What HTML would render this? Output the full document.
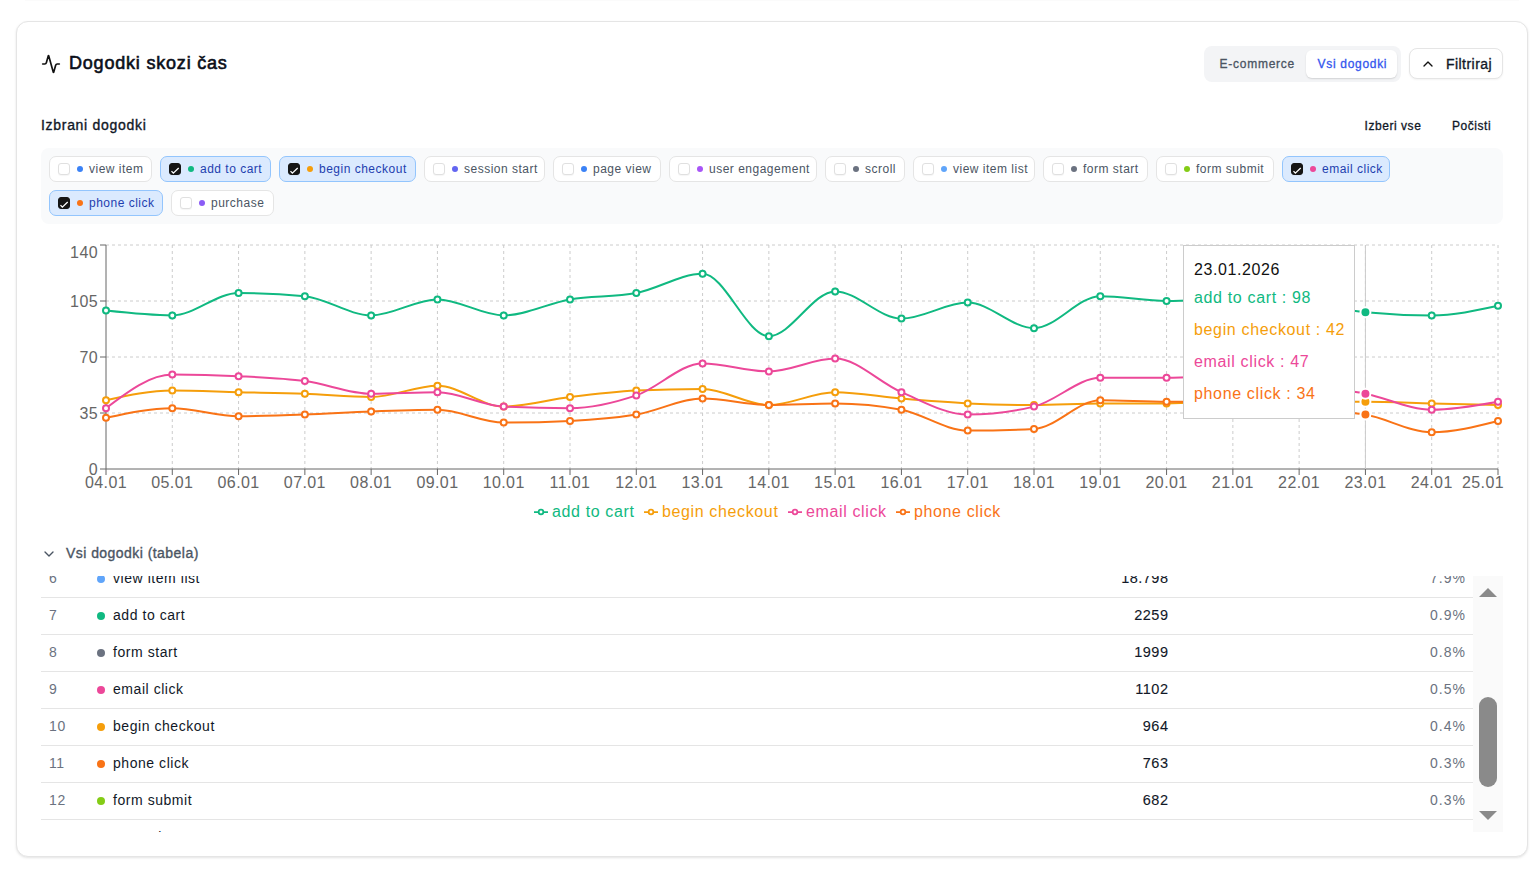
<!DOCTYPE html>
<html><head><meta charset="utf-8">
<style>
*{box-sizing:border-box;margin:0;padding:0}
html,body{width:1539px;height:869px;overflow:hidden;background:#fff;font-family:"Liberation Sans",sans-serif;color:#111827}
.abs{position:absolute}
.topline{position:absolute;left:25px;top:0;width:1494px;height:1px;background:#fbfbfb}
.card{position:absolute;left:16px;top:21px;width:1512px;height:836px;border:1px solid #e5e5e5;border-radius:12px;background:#fff;box-shadow:0 1px 3px rgba(0,0,0,.08),0 1px 2px rgba(0,0,0,.04)}
.title{position:absolute;left:69px;top:51px;font-size:18px;line-height:24px;font-weight:400;-webkit-text-stroke:.6px currentColor;white-space:nowrap;letter-spacing:.8px;color:#0b0f19}
.tgl{position:absolute;left:1204px;top:46px;width:197px;height:36px;background:#f3f4f6;border-radius:8px}
.tg1{position:absolute;left:1219.5px;top:56px;font-size:12px;line-height:16px;color:#4b5563;-webkit-text-stroke:.3px currentColor;white-space:nowrap;letter-spacing:.75px}
.pill{position:absolute;left:1306px;top:50px;width:91px;height:28px;background:#fff;border-radius:6px;box-shadow:0 1px 2px rgba(0,0,0,.1),0 1px 1px rgba(0,0,0,.04)}
.tg2{position:absolute;left:1317.5px;top:56px;font-size:12px;line-height:16px;color:#3355ee;-webkit-text-stroke:.3px currentColor;white-space:nowrap;letter-spacing:.7px}
.fbtn{position:absolute;left:1409px;top:48px;width:94px;height:31px;border:1px solid #e5e5e5;border-radius:8px;background:#fff;box-shadow:0 1px 2px rgba(0,0,0,.05)}
.ftxt{position:absolute;left:1446px;top:55px;font-size:14px;line-height:18px;font-weight:400;-webkit-text-stroke:.35px currentColor;white-space:nowrap;letter-spacing:.45px;color:#111827}
.h2{position:absolute;left:41px;top:116px;font-size:14px;line-height:18px;font-weight:400;-webkit-text-stroke:.35px currentColor;white-space:nowrap;letter-spacing:.7px;color:#111827}
.lnk{position:absolute;top:118px;font-size:12px;line-height:16px;font-weight:400;-webkit-text-stroke:.3px currentColor;white-space:nowrap;letter-spacing:.55px;color:#111827}
.panel{position:absolute;left:41px;top:148px;width:1462px;height:76px;background:#f9fafb;border-radius:8px;padding:8px;display:flex;flex-wrap:wrap;gap:8px;align-content:flex-start}
.chip{height:26px;border:1px solid #e5e5e5;border-radius:7px;background:#fff;display:flex;align-items:center;padding-left:8px;position:relative}
.chip.sel{background:#dbeafe;border-color:#93c5fd}
.cb{width:12px;height:12px;border:1px solid #e0e0e0;border-radius:3px;background:#fff;display:block;position:relative;box-shadow:0 1px 1px rgba(0,0,0,.04)}
.cb.on{background:#151515;border-color:#151515}
.cb svg{position:absolute;left:-1px;top:-1px}
.dot{width:6px;height:6px;border-radius:50%;margin-left:7px;display:block}
.ct{margin-left:6px;font-size:12px;line-height:16px;color:#4b5563;white-space:nowrap;letter-spacing:.5px}
.chip.sel .ct{color:#1e40af}
.leg{position:absolute;top:502px;height:20px;display:flex;align-items:center;font-size:16px;line-height:20px;white-space:nowrap;letter-spacing:.63px}
.leg svg{margin-right:4px}
.tip{position:absolute;left:1183px;top:245px;width:172px;height:174px;background:#fff;border:1px solid #ccc;padding:11.5px 10px 10px;font-size:16px;white-space:nowrap}
.tip .lbl{line-height:24px;color:#111;letter-spacing:.59px}
.tip .it{line-height:24px;padding:4px 0;letter-spacing:.65px}
.sec{position:absolute;left:66px;top:544px;font-size:14px;line-height:18px;font-weight:400;-webkit-text-stroke:.35px currentColor;color:#4b5563;white-space:nowrap;letter-spacing:.45px}
.scroller{position:absolute;left:41px;top:576px;width:1462px;height:256px;overflow:hidden}
.row{position:absolute;left:0;width:1432px;height:37px;border-bottom:1px solid #e5e5e5}
.row span{position:absolute;top:0;line-height:35px;font-size:14px;white-space:nowrap}
.rk{left:8px;color:#6b7280;letter-spacing:.6px}
.rdot{left:56px;top:14px!important;width:8px;height:8px;border-radius:50%}
.rn{left:72px;color:#111827;letter-spacing:.55px}
.rc{right:304.5px;color:#111827;letter-spacing:.5px;font-size:14.5px!important;-webkit-text-stroke:.1px currentColor}
.rp{right:7px;color:#6b7280;letter-spacing:1px}
.sb{position:absolute;left:1432px;top:0;width:30px;height:256px;background:#fafafa}
.sbt{position:absolute;left:6px;top:121px;width:18px;height:90px;border-radius:9px;background:#8a8a8a}
</style></head><body>
<div class="topline"></div>
<div class="card"></div>
<svg class="abs" style="left:41px;top:54px" width="20" height="20" viewBox="0 0 24 24" fill="none" stroke="#111" stroke-width="2" stroke-linecap="round" stroke-linejoin="round"><path d="M22 12h-2.48a2 2 0 0 0-1.93 1.46l-2.35 8.36a.25.25 0 0 1-.48 0L9.24 2.18a.25.25 0 0 0-.48 0l-2.35 8.36A2 2 0 0 1 4.49 12H2"/></svg>
<div class="title">Dogodki skozi čas</div>
<div class="tgl"></div>
<div class="tg1">E-commerce</div>
<div class="pill"></div>
<div class="tg2">Vsi dogodki</div>
<div class="fbtn"></div>
<svg class="abs" style="left:1420px;top:56px" width="16" height="16" viewBox="0 0 24 24" fill="none" stroke="#111" stroke-width="2" stroke-linecap="round" stroke-linejoin="round"><path d="m18 15-6-6-6 6"/></svg>
<div class="ftxt">Filtriraj</div>
<div class="h2">Izbrani dogodki</div>
<div class="lnk" style="left:1364.5px">Izberi vse</div>
<div class="lnk" style="left:1452px">Počisti</div>
<div class="panel"><div class="chip" style="width:103px"><span class="cb"></span><span class="dot" style="background:#3b82f6"></span><span class="ct">view item</span></div><div class="chip sel" style="width:111px"><span class="cb on"><svg width="12" height="12" viewBox="0 0 12 12"><path d="M2.5 8.1L4.35 10.1L9.7 5" stroke="#fff" stroke-width="1.3" fill="none"/></svg></span><span class="dot" style="background:#10b981"></span><span class="ct">add to cart</span></div><div class="chip sel" style="width:137px"><span class="cb on"><svg width="12" height="12" viewBox="0 0 12 12"><path d="M2.5 8.1L4.35 10.1L9.7 5" stroke="#fff" stroke-width="1.3" fill="none"/></svg></span><span class="dot" style="background:#f59e0b"></span><span class="ct">begin checkout</span></div><div class="chip" style="width:121px"><span class="cb"></span><span class="dot" style="background:#6366f1"></span><span class="ct">session start</span></div><div class="chip" style="width:108px"><span class="cb"></span><span class="dot" style="background:#3b82f6"></span><span class="ct">page view</span></div><div class="chip" style="width:148px"><span class="cb"></span><span class="dot" style="background:#a855f7"></span><span class="ct">user engagement</span></div><div class="chip" style="width:80px"><span class="cb"></span><span class="dot" style="background:#6b7280"></span><span class="ct">scroll</span></div><div class="chip" style="width:122px"><span class="cb"></span><span class="dot" style="background:#60a5fa"></span><span class="ct">view item list</span></div><div class="chip" style="width:105px"><span class="cb"></span><span class="dot" style="background:#6b7280"></span><span class="ct">form start</span></div><div class="chip" style="width:118px"><span class="cb"></span><span class="dot" style="background:#84cc16"></span><span class="ct">form submit</span></div><div class="chip sel" style="width:108px"><span class="cb on"><svg width="12" height="12" viewBox="0 0 12 12"><path d="M2.5 8.1L4.35 10.1L9.7 5" stroke="#fff" stroke-width="1.3" fill="none"/></svg></span><span class="dot" style="background:#ec4899"></span><span class="ct">email click</span></div><div class="chip sel" style="width:114px"><span class="cb on"><svg width="12" height="12" viewBox="0 0 12 12"><path d="M2.5 8.1L4.35 10.1L9.7 5" stroke="#fff" stroke-width="1.3" fill="none"/></svg></span><span class="dot" style="background:#f97316"></span><span class="ct">phone click</span></div><div class="chip" style="width:103px"><span class="cb"></span><span class="dot" style="background:#8b5cf6"></span><span class="ct">purchase</span></div></div>
<svg class="chart" width="1539" height="540" viewBox="0 0 1539 540" style="position:absolute;left:0;top:0">
<g stroke="#ccc" stroke-dasharray="3 3" fill="none"><line x1="106.0" y1="413.0" x2="1498.0" y2="413.0"/><line x1="106.0" y1="357.0" x2="1498.0" y2="357.0"/><line x1="106.0" y1="301.0" x2="1498.0" y2="301.0"/><line x1="106.0" y1="245.0" x2="1498.0" y2="245.0"/><line x1="172.29" y1="245.0" x2="172.29" y2="469.0"/><line x1="238.57" y1="245.0" x2="238.57" y2="469.0"/><line x1="304.86" y1="245.0" x2="304.86" y2="469.0"/><line x1="371.14" y1="245.0" x2="371.14" y2="469.0"/><line x1="437.43" y1="245.0" x2="437.43" y2="469.0"/><line x1="503.71" y1="245.0" x2="503.71" y2="469.0"/><line x1="570.00" y1="245.0" x2="570.00" y2="469.0"/><line x1="636.29" y1="245.0" x2="636.29" y2="469.0"/><line x1="702.57" y1="245.0" x2="702.57" y2="469.0"/><line x1="768.86" y1="245.0" x2="768.86" y2="469.0"/><line x1="835.14" y1="245.0" x2="835.14" y2="469.0"/><line x1="901.43" y1="245.0" x2="901.43" y2="469.0"/><line x1="967.71" y1="245.0" x2="967.71" y2="469.0"/><line x1="1034.00" y1="245.0" x2="1034.00" y2="469.0"/><line x1="1100.29" y1="245.0" x2="1100.29" y2="469.0"/><line x1="1166.57" y1="245.0" x2="1166.57" y2="469.0"/><line x1="1232.86" y1="245.0" x2="1232.86" y2="469.0"/><line x1="1299.14" y1="245.0" x2="1299.14" y2="469.0"/><line x1="1365.43" y1="245.0" x2="1365.43" y2="469.0"/><line x1="1431.71" y1="245.0" x2="1431.71" y2="469.0"/><line x1="1498.00" y1="245.0" x2="1498.00" y2="469.0"/></g>
<g stroke="#666" fill="none"><line x1="106.0" y1="245.0" x2="106.0" y2="469.0"/><line x1="106.0" y1="469.0" x2="1498.0" y2="469.0"/><line x1="100.0" y1="469.0" x2="106.0" y2="469.0"/><line x1="100.0" y1="413.0" x2="106.0" y2="413.0"/><line x1="100.0" y1="357.0" x2="106.0" y2="357.0"/><line x1="100.0" y1="301.0" x2="106.0" y2="301.0"/><line x1="100.0" y1="245.0" x2="106.0" y2="245.0"/><line x1="106.00" y1="469.0" x2="106.00" y2="475.0"/><line x1="172.29" y1="469.0" x2="172.29" y2="475.0"/><line x1="238.57" y1="469.0" x2="238.57" y2="475.0"/><line x1="304.86" y1="469.0" x2="304.86" y2="475.0"/><line x1="371.14" y1="469.0" x2="371.14" y2="475.0"/><line x1="437.43" y1="469.0" x2="437.43" y2="475.0"/><line x1="503.71" y1="469.0" x2="503.71" y2="475.0"/><line x1="570.00" y1="469.0" x2="570.00" y2="475.0"/><line x1="636.29" y1="469.0" x2="636.29" y2="475.0"/><line x1="702.57" y1="469.0" x2="702.57" y2="475.0"/><line x1="768.86" y1="469.0" x2="768.86" y2="475.0"/><line x1="835.14" y1="469.0" x2="835.14" y2="475.0"/><line x1="901.43" y1="469.0" x2="901.43" y2="475.0"/><line x1="967.71" y1="469.0" x2="967.71" y2="475.0"/><line x1="1034.00" y1="469.0" x2="1034.00" y2="475.0"/><line x1="1100.29" y1="469.0" x2="1100.29" y2="475.0"/><line x1="1166.57" y1="469.0" x2="1166.57" y2="475.0"/><line x1="1232.86" y1="469.0" x2="1232.86" y2="475.0"/><line x1="1299.14" y1="469.0" x2="1299.14" y2="475.0"/><line x1="1365.43" y1="469.0" x2="1365.43" y2="475.0"/><line x1="1431.71" y1="469.0" x2="1431.71" y2="475.0"/><line x1="1498.00" y1="469.0" x2="1498.00" y2="475.0"/></g>
<g fill="#666" font-size="16" letter-spacing="0.4" font-family="Liberation Sans, sans-serif"><text x="98" y="474.68" text-anchor="end">0</text><text x="98" y="418.68" text-anchor="end">35</text><text x="98" y="362.68" text-anchor="end">70</text><text x="98" y="306.68" text-anchor="end">105</text><text x="98" y="257.68" text-anchor="end">140</text><text x="106.00" y="488.4" text-anchor="middle">04.01</text><text x="172.29" y="488.4" text-anchor="middle">05.01</text><text x="238.57" y="488.4" text-anchor="middle">06.01</text><text x="304.86" y="488.4" text-anchor="middle">07.01</text><text x="371.14" y="488.4" text-anchor="middle">08.01</text><text x="437.43" y="488.4" text-anchor="middle">09.01</text><text x="503.71" y="488.4" text-anchor="middle">10.01</text><text x="570.00" y="488.4" text-anchor="middle">11.01</text><text x="636.29" y="488.4" text-anchor="middle">12.01</text><text x="702.57" y="488.4" text-anchor="middle">13.01</text><text x="768.86" y="488.4" text-anchor="middle">14.01</text><text x="835.14" y="488.4" text-anchor="middle">15.01</text><text x="901.43" y="488.4" text-anchor="middle">16.01</text><text x="967.71" y="488.4" text-anchor="middle">17.01</text><text x="1034.00" y="488.4" text-anchor="middle">18.01</text><text x="1100.29" y="488.4" text-anchor="middle">19.01</text><text x="1166.57" y="488.4" text-anchor="middle">20.01</text><text x="1232.86" y="488.4" text-anchor="middle">21.01</text><text x="1299.14" y="488.4" text-anchor="middle">22.01</text><text x="1365.43" y="488.4" text-anchor="middle">23.01</text><text x="1431.71" y="488.4" text-anchor="middle">24.01</text><text x="1483.00" y="488.4" text-anchor="middle">25.01</text></g>
<line x1="1365.43" y1="245.0" x2="1365.43" y2="469.0" stroke="#ccc" stroke-width="1"/>
<path d="M106.00,310.60C128.10,313.00,150.19,315.40,172.29,315.40C194.38,315.40,216.48,293.00,238.57,293.00C260.67,293.00,282.76,294.07,304.86,296.20C326.95,298.33,349.05,315.40,371.14,315.40C393.24,315.40,415.33,299.40,437.43,299.40C459.52,299.40,481.62,315.40,503.71,315.40C525.81,315.40,547.90,303.13,570.00,299.40C592.10,295.67,614.19,297.27,636.29,293.00C658.38,288.73,680.48,273.80,702.57,273.80C724.67,273.80,746.76,336.20,768.86,336.20C790.95,336.20,813.05,291.40,835.14,291.40C857.24,291.40,879.33,318.60,901.43,318.60C923.52,318.60,945.62,302.60,967.71,302.60C989.81,302.60,1011.90,328.20,1034.00,328.20C1056.10,328.20,1078.19,296.20,1100.29,296.20C1122.38,296.20,1144.48,301.00,1166.57,301.00C1188.67,301.00,1210.76,299.40,1232.86,299.40C1254.95,299.40,1277.05,300.47,1299.14,302.60C1321.24,304.73,1343.33,310.07,1365.43,312.20C1387.52,314.33,1409.62,315.40,1431.71,315.40C1453.81,315.40,1475.90,310.60,1498.00,305.80" stroke="#10b981" stroke-width="2" fill="none"/>
<path d="M106.00,400.20C128.10,395.40,150.19,390.60,172.29,390.60C194.38,390.60,216.48,391.67,238.57,392.20C260.67,392.73,282.76,393.00,304.86,393.80C326.95,394.60,349.05,397.00,371.14,397.00C393.24,397.00,415.33,385.80,437.43,385.80C459.52,385.80,481.62,406.60,503.71,406.60C525.81,406.60,547.90,399.67,570.00,397.00C592.10,394.33,614.19,391.67,636.29,390.60C658.38,389.53,680.48,389.00,702.57,389.00C724.67,389.00,746.76,405.00,768.86,405.00C790.95,405.00,813.05,392.20,835.14,392.20C857.24,392.20,879.33,396.73,901.43,398.60C923.52,400.47,945.62,402.33,967.71,403.40C989.81,404.47,1011.90,405.00,1034.00,405.00C1056.10,405.00,1078.19,403.40,1100.29,403.40C1122.38,403.40,1144.48,403.40,1166.57,403.40C1188.67,403.40,1210.76,401.80,1232.86,401.80C1254.95,401.80,1277.05,401.80,1299.14,401.80C1321.24,401.80,1343.33,401.80,1365.43,401.80C1387.52,401.80,1409.62,402.87,1431.71,403.40C1453.81,403.93,1475.90,404.47,1498.00,405.00" stroke="#f59e0b" stroke-width="2" fill="none"/>
<path d="M106.00,408.20C128.10,391.40,150.19,374.60,172.29,374.60C194.38,374.60,216.48,375.13,238.57,376.20C260.67,377.27,282.76,378.07,304.86,381.00C326.95,383.93,349.05,393.80,371.14,393.80C393.24,393.80,415.33,392.20,437.43,392.20C459.52,392.20,481.62,405.53,503.71,406.60C525.81,407.67,547.90,408.20,570.00,408.20C592.10,408.20,614.19,402.87,636.29,395.40C658.38,387.93,680.48,363.40,702.57,363.40C724.67,363.40,746.76,371.40,768.86,371.40C790.95,371.40,813.05,358.60,835.14,358.60C857.24,358.60,879.33,382.87,901.43,392.20C923.52,401.53,945.62,414.60,967.71,414.60C989.81,414.60,1011.90,411.93,1034.00,406.60C1056.10,401.27,1078.19,377.80,1100.29,377.80C1122.38,377.80,1144.48,377.80,1166.57,377.80C1188.67,377.80,1210.76,376.20,1232.86,376.20C1254.95,376.20,1277.05,381.27,1299.14,384.20C1321.24,387.13,1343.33,389.53,1365.43,393.80C1387.52,398.07,1409.62,409.80,1431.71,409.80C1453.81,409.80,1475.90,405.80,1498.00,401.80" stroke="#ec4899" stroke-width="2" fill="none"/>
<path d="M106.00,417.80C128.10,413.00,150.19,408.20,172.29,408.20C194.38,408.20,216.48,416.20,238.57,416.20C260.67,416.20,282.76,415.40,304.86,414.60C326.95,413.80,349.05,412.20,371.14,411.40C393.24,410.60,415.33,409.80,437.43,409.80C459.52,409.80,481.62,422.60,503.71,422.60C525.81,422.60,547.90,422.07,570.00,421.00C592.10,419.93,614.19,418.33,636.29,414.60C658.38,410.87,680.48,398.60,702.57,398.60C724.67,398.60,746.76,405.00,768.86,405.00C790.95,405.00,813.05,403.40,835.14,403.40C857.24,403.40,879.33,405.53,901.43,409.80C923.52,414.07,945.62,430.60,967.71,430.60C989.81,430.60,1011.90,430.07,1034.00,429.00C1056.10,427.93,1078.19,400.20,1100.29,400.20C1122.38,400.20,1144.48,401.80,1166.57,401.80C1188.67,401.80,1210.76,401.80,1232.86,401.80C1254.95,401.80,1277.05,406.07,1299.14,408.20C1321.24,410.33,1343.33,410.60,1365.43,414.60C1387.52,418.60,1409.62,432.20,1431.71,432.20C1453.81,432.20,1475.90,426.60,1498.00,421.00" stroke="#f97316" stroke-width="2" fill="none"/>
<g stroke="#10b981" stroke-width="2" fill="#fff"><circle cx="106.00" cy="310.60" r="3"/><circle cx="172.29" cy="315.40" r="3"/><circle cx="238.57" cy="293.00" r="3"/><circle cx="304.86" cy="296.20" r="3"/><circle cx="371.14" cy="315.40" r="3"/><circle cx="437.43" cy="299.40" r="3"/><circle cx="503.71" cy="315.40" r="3"/><circle cx="570.00" cy="299.40" r="3"/><circle cx="636.29" cy="293.00" r="3"/><circle cx="702.57" cy="273.80" r="3"/><circle cx="768.86" cy="336.20" r="3"/><circle cx="835.14" cy="291.40" r="3"/><circle cx="901.43" cy="318.60" r="3"/><circle cx="967.71" cy="302.60" r="3"/><circle cx="1034.00" cy="328.20" r="3"/><circle cx="1100.29" cy="296.20" r="3"/><circle cx="1166.57" cy="301.00" r="3"/><circle cx="1232.86" cy="299.40" r="3"/><circle cx="1299.14" cy="302.60" r="3"/><circle cx="1431.71" cy="315.40" r="3"/><circle cx="1498.00" cy="305.80" r="3"/></g>
<g stroke="#f59e0b" stroke-width="2" fill="#fff"><circle cx="106.00" cy="400.20" r="3"/><circle cx="172.29" cy="390.60" r="3"/><circle cx="238.57" cy="392.20" r="3"/><circle cx="304.86" cy="393.80" r="3"/><circle cx="371.14" cy="397.00" r="3"/><circle cx="437.43" cy="385.80" r="3"/><circle cx="503.71" cy="406.60" r="3"/><circle cx="570.00" cy="397.00" r="3"/><circle cx="636.29" cy="390.60" r="3"/><circle cx="702.57" cy="389.00" r="3"/><circle cx="768.86" cy="405.00" r="3"/><circle cx="835.14" cy="392.20" r="3"/><circle cx="901.43" cy="398.60" r="3"/><circle cx="967.71" cy="403.40" r="3"/><circle cx="1034.00" cy="405.00" r="3"/><circle cx="1100.29" cy="403.40" r="3"/><circle cx="1166.57" cy="403.40" r="3"/><circle cx="1232.86" cy="401.80" r="3"/><circle cx="1299.14" cy="401.80" r="3"/><circle cx="1431.71" cy="403.40" r="3"/><circle cx="1498.00" cy="405.00" r="3"/></g>
<g stroke="#ec4899" stroke-width="2" fill="#fff"><circle cx="106.00" cy="408.20" r="3"/><circle cx="172.29" cy="374.60" r="3"/><circle cx="238.57" cy="376.20" r="3"/><circle cx="304.86" cy="381.00" r="3"/><circle cx="371.14" cy="393.80" r="3"/><circle cx="437.43" cy="392.20" r="3"/><circle cx="503.71" cy="406.60" r="3"/><circle cx="570.00" cy="408.20" r="3"/><circle cx="636.29" cy="395.40" r="3"/><circle cx="702.57" cy="363.40" r="3"/><circle cx="768.86" cy="371.40" r="3"/><circle cx="835.14" cy="358.60" r="3"/><circle cx="901.43" cy="392.20" r="3"/><circle cx="967.71" cy="414.60" r="3"/><circle cx="1034.00" cy="406.60" r="3"/><circle cx="1100.29" cy="377.80" r="3"/><circle cx="1166.57" cy="377.80" r="3"/><circle cx="1232.86" cy="376.20" r="3"/><circle cx="1299.14" cy="384.20" r="3"/><circle cx="1431.71" cy="409.80" r="3"/><circle cx="1498.00" cy="401.80" r="3"/></g>
<g stroke="#f97316" stroke-width="2" fill="#fff"><circle cx="106.00" cy="417.80" r="3"/><circle cx="172.29" cy="408.20" r="3"/><circle cx="238.57" cy="416.20" r="3"/><circle cx="304.86" cy="414.60" r="3"/><circle cx="371.14" cy="411.40" r="3"/><circle cx="437.43" cy="409.80" r="3"/><circle cx="503.71" cy="422.60" r="3"/><circle cx="570.00" cy="421.00" r="3"/><circle cx="636.29" cy="414.60" r="3"/><circle cx="702.57" cy="398.60" r="3"/><circle cx="768.86" cy="405.00" r="3"/><circle cx="835.14" cy="403.40" r="3"/><circle cx="901.43" cy="409.80" r="3"/><circle cx="967.71" cy="430.60" r="3"/><circle cx="1034.00" cy="429.00" r="3"/><circle cx="1100.29" cy="400.20" r="3"/><circle cx="1166.57" cy="401.80" r="3"/><circle cx="1232.86" cy="401.80" r="3"/><circle cx="1299.14" cy="408.20" r="3"/><circle cx="1431.71" cy="432.20" r="3"/><circle cx="1498.00" cy="421.00" r="3"/></g>
<circle cx="1365.43" cy="312.20" r="5" fill="#10b981" stroke="#fff" stroke-width="2"/>
<circle cx="1365.43" cy="401.80" r="5" fill="#f59e0b" stroke="#fff" stroke-width="2"/>
<circle cx="1365.43" cy="393.80" r="5" fill="#ec4899" stroke="#fff" stroke-width="2"/>
<circle cx="1365.43" cy="414.60" r="5" fill="#f97316" stroke="#fff" stroke-width="2"/>
</svg>
<div class="leg" style="left:534px;color:#10b981"><svg width="14" height="14" viewBox="0 0 32 32"><path stroke-width="4" fill="none" stroke="#10b981" d="M0,16h10.666666666666666A5.333333333333333,5.333333333333333,0,1,1,21.333333333333332,16H32M21.333333333333332,16A5.333333333333333,5.333333333333333,0,1,1,10.666666666666666,16"/></svg>add to cart</div>
<div class="leg" style="left:644px;color:#f59e0b"><svg width="14" height="14" viewBox="0 0 32 32"><path stroke-width="4" fill="none" stroke="#f59e0b" d="M0,16h10.666666666666666A5.333333333333333,5.333333333333333,0,1,1,21.333333333333332,16H32M21.333333333333332,16A5.333333333333333,5.333333333333333,0,1,1,10.666666666666666,16"/></svg>begin checkout</div>
<div class="leg" style="left:788px;color:#ec4899"><svg width="14" height="14" viewBox="0 0 32 32"><path stroke-width="4" fill="none" stroke="#ec4899" d="M0,16h10.666666666666666A5.333333333333333,5.333333333333333,0,1,1,21.333333333333332,16H32M21.333333333333332,16A5.333333333333333,5.333333333333333,0,1,1,10.666666666666666,16"/></svg>email click</div>
<div class="leg" style="left:896px;color:#f97316"><svg width="14" height="14" viewBox="0 0 32 32"><path stroke-width="4" fill="none" stroke="#f97316" d="M0,16h10.666666666666666A5.333333333333333,5.333333333333333,0,1,1,21.333333333333332,16H32M21.333333333333332,16A5.333333333333333,5.333333333333333,0,1,1,10.666666666666666,16"/></svg>phone click</div>
<div class="tip"><div class="lbl">23.01.2026</div><div class="it" style="color:#10b981">add to cart : 98</div><div class="it" style="color:#f59e0b">begin checkout : 42</div><div class="it" style="color:#ec4899">email click : 47</div><div class="it" style="color:#f97316">phone click : 34</div></div>
<svg class="abs" style="left:41px;top:546px" width="16" height="16" viewBox="0 0 24 24" fill="none" stroke="#4b5563" stroke-width="2" stroke-linecap="round" stroke-linejoin="round"><path d="m6 9 6 6 6-6"/></svg>
<div class="sec">Vsi dogodki (tabela)</div>
<div class="scroller"><div class="row" style="top:-15px"><span class="rk">6</span><span class="rdot" style="background:#60a5fa"></span><span class="rn">view item list</span><span class="rc">18.798</span><span class="rp">7.9%</span></div><div class="row" style="top:22px"><span class="rk">7</span><span class="rdot" style="background:#10b981"></span><span class="rn">add to cart</span><span class="rc">2259</span><span class="rp">0.9%</span></div><div class="row" style="top:59px"><span class="rk">8</span><span class="rdot" style="background:#6b7280"></span><span class="rn">form start</span><span class="rc">1999</span><span class="rp">0.8%</span></div><div class="row" style="top:96px"><span class="rk">9</span><span class="rdot" style="background:#ec4899"></span><span class="rn">email click</span><span class="rc">1102</span><span class="rp">0.5%</span></div><div class="row" style="top:133px"><span class="rk">10</span><span class="rdot" style="background:#f59e0b"></span><span class="rn">begin checkout</span><span class="rc">964</span><span class="rp">0.4%</span></div><div class="row" style="top:170px"><span class="rk">11</span><span class="rdot" style="background:#f97316"></span><span class="rn">phone click</span><span class="rc">763</span><span class="rp">0.3%</span></div><div class="row" style="top:207px"><span class="rk">12</span><span class="rdot" style="background:#84cc16"></span><span class="rn">form submit</span><span class="rc">682</span><span class="rp">0.3%</span></div><div class="row" style="top:244px"><span class="rk">13</span><span class="rdot" style="background:#3b82f6"></span><span class="rn">page view</span><span class="rc">611</span><span class="rp">0.3%</span></div>
<div class="sb"><svg class="abs" style="left:6px;top:12px" width="18" height="9"><path d="M0 9L9 0L18 9Z" fill="#8a8a8a"/></svg><div class="sbt"></div><svg class="abs" style="left:6px;top:235px" width="18" height="9"><path d="M0 0L18 0L9 9Z" fill="#8a8a8a"/></svg></div>
</div>
</body></html>
